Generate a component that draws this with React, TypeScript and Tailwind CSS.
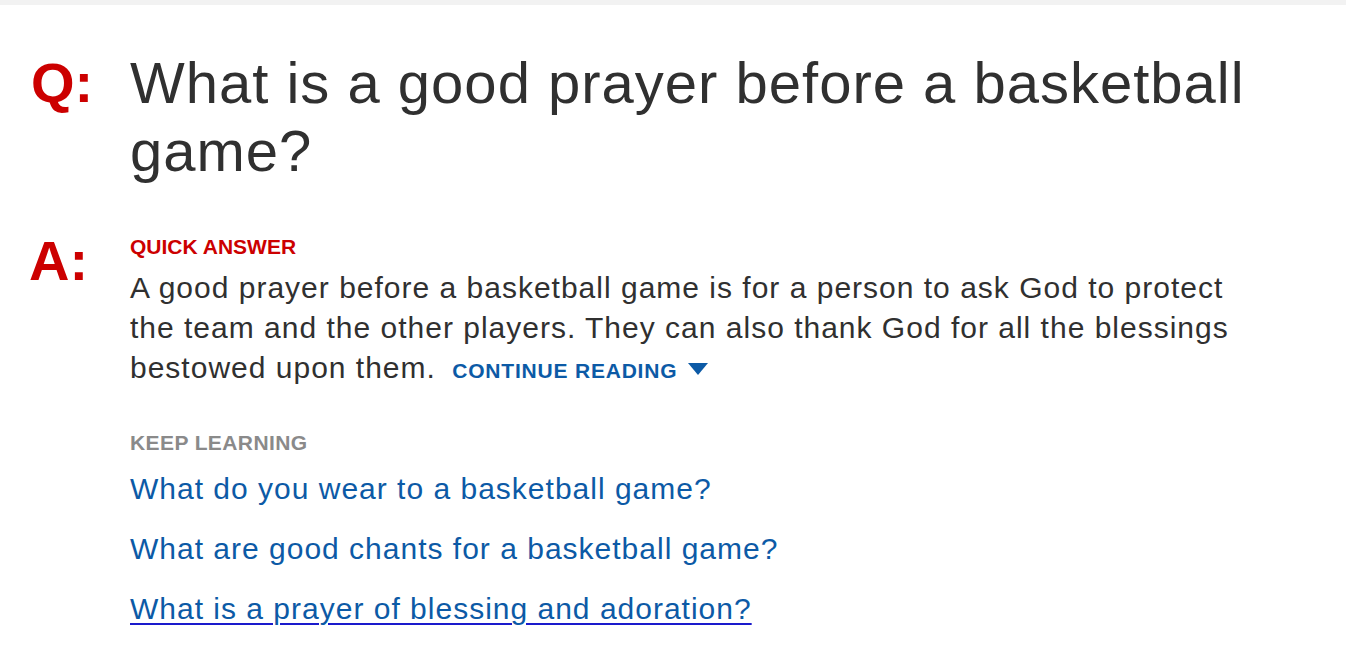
import React from "react";

export default function App() {
  const font = { fontFamily: '"Liberation Sans", Arial, Helvetica, sans-serif' };
  return (
    <div className="min-h-[656px] w-full bg-white" style={font}>
      <div className="h-[5px] bg-[#f2f2f2]" />
      {/* Question row */}
      <div className="mt-[44px] flex">
        <div className="w-[130px] shrink-0 pl-[31px]">
          <span className="block text-[56px] font-bold leading-[68px] text-[#cc0000]">Q:</span>
        </div>
        <h1 className="w-[1130px] text-[58px] font-normal leading-[68px] tracking-[1px] text-[#303030]">
          What is a good prayer before a basketball game?
        </h1>
      </div>
      {/* Answer row */}
      <div className="mt-[50px] flex">
        <div className="w-[130px] shrink-0 pl-[29px]">
          <span className="-mt-[2px] block text-[56px] font-bold leading-none text-[#cc0000]">A:</span>
        </div>
        <div className="w-[1130px]">
          <div className="text-[21px] font-bold leading-[24px] text-[#cc0000]">QUICK ANSWER</div>
          <p className="mt-[9px] text-[30px] leading-[40px] tracking-[1px] text-[#303030]">
            A good prayer before a basketball game is for a person to ask God to protect the team and the other
            players. They can also thank God for all the blessings bestowed upon them.{" "}
            <span className="ml-[7px] whitespace-nowrap text-[21px] font-bold tracking-[0.8px] text-[#0c5aa6]">
              CONTINUE READING
              <svg
                className="ml-[11px] inline-block"
                width="20"
                height="12"
                viewBox="0 0 20 12"
                style={{ verticalAlign: "3px" }}
              >
                <polygon points="0,0 20,0 10,12" fill="#0c5aa6" />
              </svg>
            </span>
          </p>
          <div className="mt-[40px] text-[21px] font-bold leading-[24px] tracking-[0.4px] text-[#8a8a8a]">
            KEEP LEARNING
          </div>
          <div className="mt-[14px] flex flex-col items-start gap-[20px] text-[30px] leading-[40px] tracking-[1px] text-[#0c5aa6]">
            <a href="#" className="no-underline">What do you wear to a basketball game?</a>
            <a href="#" className="no-underline">What are good chants for a basketball game?</a>
            <a
              href="#"
              className="underline decoration-[#1a1acc] decoration-2 underline-offset-[4px]"
            >
              What is a prayer of blessing and adoration?
            </a>
          </div>
        </div>
      </div>
    </div>
  );
}
